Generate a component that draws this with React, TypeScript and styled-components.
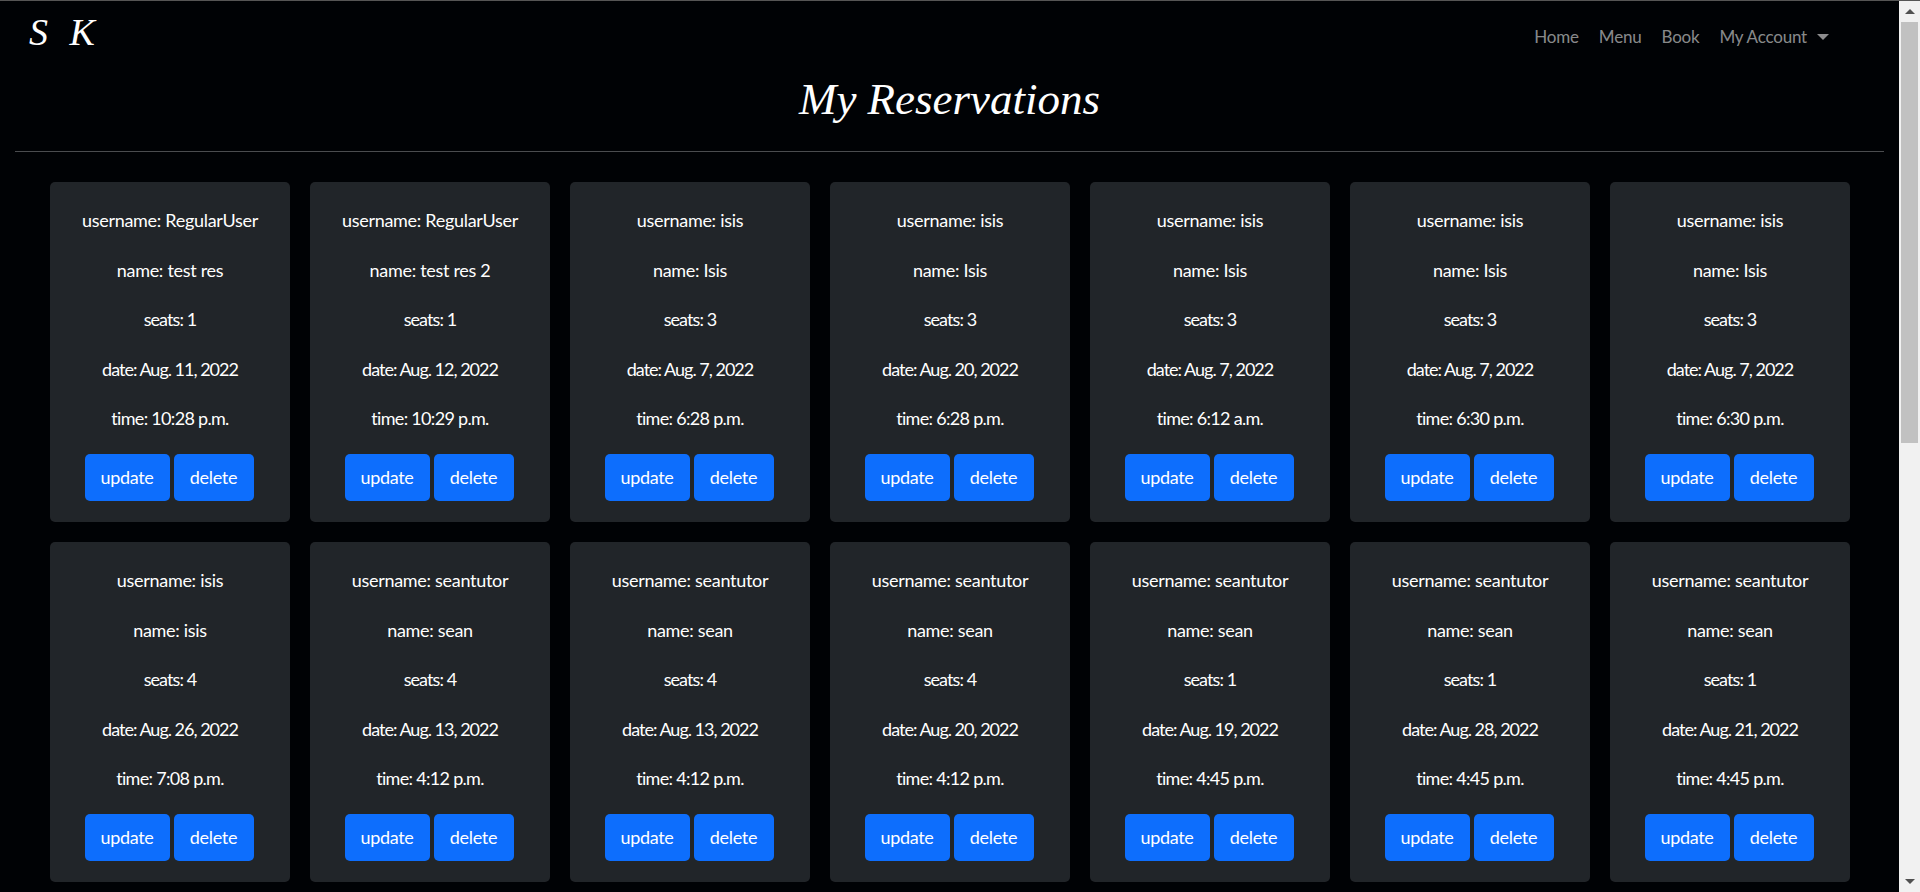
import React from "react";
import styled, { createGlobalStyle } from "styled-components";

type Reservation = {
  username: string;
  name: string;
  seats: number;
  date: string;
  time: string;
};

const reservations: Reservation[] = [
  { username: "RegularUser", name: "test res", seats: 1, date: "Aug. 11, 2022", time: "10:28 p.m." },
  { username: "RegularUser", name: "test res 2", seats: 1, date: "Aug. 12, 2022", time: "10:29 p.m." },
  { username: "isis", name: "Isis", seats: 3, date: "Aug. 7, 2022", time: "6:28 p.m." },
  { username: "isis", name: "Isis", seats: 3, date: "Aug. 20, 2022", time: "6:28 p.m." },
  { username: "isis", name: "Isis", seats: 3, date: "Aug. 7, 2022", time: "6:12 a.m." },
  { username: "isis", name: "Isis", seats: 3, date: "Aug. 7, 2022", time: "6:30 p.m." },
  { username: "isis", name: "Isis", seats: 3, date: "Aug. 7, 2022", time: "6:30 p.m." },
  { username: "isis", name: "isis", seats: 4, date: "Aug. 26, 2022", time: "7:08 p.m." },
  { username: "seantutor", name: "sean", seats: 4, date: "Aug. 13, 2022", time: "4:12 p.m." },
  { username: "seantutor", name: "sean", seats: 4, date: "Aug. 13, 2022", time: "4:12 p.m." },
  { username: "seantutor", name: "sean", seats: 4, date: "Aug. 20, 2022", time: "4:12 p.m." },
  { username: "seantutor", name: "sean", seats: 1, date: "Aug. 19, 2022", time: "4:45 p.m." },
  { username: "seantutor", name: "sean", seats: 1, date: "Aug. 28, 2022", time: "4:45 p.m." },
  { username: "seantutor", name: "sean", seats: 1, date: "Aug. 21, 2022", time: "4:45 p.m." },
];

const App: React.FC = () => (
  <>
    <GlobalStyle />
    <Shell>
      <Main>
        <Navbar>
          <Brand>S K</Brand>
          <NavLinks>
            <NavLink>Home</NavLink>
            <NavLink>Menu</NavLink>
            <NavLink>Book</NavLink>
            <NavLink>
              My Account
              <Caret />
            </NavLink>
          </NavLinks>
        </Navbar>
        <Title>My Reservations</Title>
        <Divider />
        <Grid>
          {reservations.map((r, i) => (
            <Card key={i}>
              <Line>username: {r.username}</Line>
              <Line>name: {r.name}</Line>
              <Line $spacing={-0.9}>seats: {r.seats}</Line>
              <Line $spacing={-1}>date: {r.date}</Line>
              <Line $spacing={-0.7}>time: {r.time}</Line>
              <Actions>
                <Button $width={85}>update</Button>
                <Button $width={80}>delete</Button>
              </Actions>
            </Card>
          ))}
        </Grid>
      </Main>
      <ScrollTrack>
        <ScrollButton>
          <ArrowUp />
        </ScrollButton>
        <ScrollThumb />
        <ScrollButton>
          <ArrowDown />
        </ScrollButton>
      </ScrollTrack>
    </Shell>
  </>
);

const GlobalStyle = createGlobalStyle`
  body {
    margin: 0;
    background: #000205;
    color: #fff;
    font-family: "Lato", sans-serif;
  }
`;

const Shell = styled.div`
  display: flex;
  height: 100vh;
  box-sizing: border-box;
  border-top: 1px solid #555;
  overflow: hidden;
`;

const Main = styled.main`
  flex: 1;
  min-width: 0;
`;

const Navbar = styled.nav`
  display: flex;
  justify-content: space-between;
  height: 60px;
  box-sizing: border-box;
  padding: 11px 70px 0 29px;
`;

const Brand = styled.div`
  font-family: "Liberation Serif", serif;
  font-style: italic;
  font-size: 38px;
  line-height: 40px;
  word-spacing: 12px;
`;

const NavLinks = styled.div`
  display: flex;
  gap: 20px;
  align-items: center;
  height: 48px;
`;

const NavLink = styled.a`
  font-size: 17px;
  letter-spacing: -0.2px;
  color: rgba(255, 255, 255, 0.55);
`;

const Caret = styled.span`
  display: inline-block;
  margin-left: 10px;
  vertical-align: 3px;
  border-top: 6px solid rgba(255, 255, 255, 0.55);
  border-left: 6px solid transparent;
  border-right: 6px solid transparent;
`;

const Title = styled.h1`
  margin: 0;
  height: 90px;
  font-family: "Liberation Serif", serif;
  font-style: italic;
  font-weight: 400;
  font-size: 45px;
  line-height: 76px;
  text-align: center;
`;

const Divider = styled.hr`
  margin: 0 15px 30px;
  border: 0;
  border-top: 1px solid #4a4c4f;
`;

const Grid = styled.div`
  display: grid;
  grid-template-columns: repeat(7, 240px);
  gap: 20px;
  padding-left: 50px;
`;

const Card = styled.div`
  display: flex;
  flex-direction: column;
  align-items: center;
  height: 340px;
  box-sizing: border-box;
  padding-top: 24px;
  background: #212529;
  border-radius: 5px;
`;

const Line = styled.p<{ $spacing?: number }>`
  margin: 0 0 20px;
  font-size: 18px;
  letter-spacing: ${({ $spacing = -0.3 }) => $spacing}px;
  line-height: 29.6px;
  text-align: center;
`;

const Actions = styled.div`
  display: flex;
  gap: 4px;
  margin-right: 2px;
`;

const Button = styled.button<{ $width: number }>`
  width: ${({ $width }) => $width}px;
  height: 47px;
  padding: 0;
  border: 0;
  border-radius: 5px;
  background: #0d6efd;
  color: #fff;
  font-family: inherit;
  font-size: 18px;
  letter-spacing: -0.3px;
`;

const ScrollTrack = styled.div`
  display: flex;
  flex: none;
  flex-direction: column;
  justify-content: space-between;
  width: 21px;
  background: #f1f1f1;
`;

const ScrollButton = styled.div`
  display: flex;
  align-items: center;
  justify-content: center;
  height: 21px;
`;

const ScrollThumb = styled.div`
  height: 421px;
  margin: 0 2px auto;
  background: #c1c1c1;
`;

const ArrowUp = styled.span`
  border-bottom: 5px solid #505050;
  border-left: 5px solid transparent;
  border-right: 5px solid transparent;
`;

const ArrowDown = styled.span`
  border-top: 5px solid #505050;
  border-left: 5px solid transparent;
  border-right: 5px solid transparent;
`;

export default App;
